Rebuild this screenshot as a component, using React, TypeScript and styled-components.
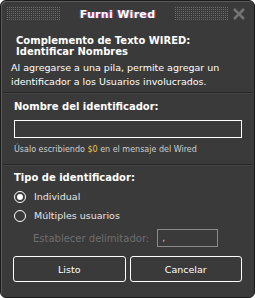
import React, {useState} from "react";
import styled, {createGlobalStyle} from "styled-components";

const Global = createGlobalStyle`
  html, body {
    margin: 0;
    padding: 0;
    background: #ffffff;
  }
  body {
    font-family: "DejaVu Sans", "Liberation Sans", sans-serif;
    -webkit-font-smoothing: none;
  }
`;

const Window = styled.div`
  width: 255px;
  height: 298px;
  box-sizing: border-box;
  background: #3a3a3a;
  border: 1px solid #1c1c1c;
  border-radius: 6px;
  box-shadow: inset 1px 1px 0 #5a5a5a;
  color: #ffffff;
  display: flex;
  flex-direction: column;
  overflow: hidden;
`;

const Header = styled.div`
  height: 26px;
  display: flex;
  align-items: center;
  padding: 0 8px 0 6px;
  gap: 8px;
`;

const Dots = styled.div`
  flex: 1;
  height: 14px;
  background-image: linear-gradient(90deg, #6b6b6b 1px, transparent 1px);
  background-size: 2px 2px;
  position: relative;
  &::after {
    content: "";
    position: absolute;
    inset: 0;
    background-image: linear-gradient(0deg, #3a3a3a 1px, transparent 1px);
    background-size: 2px 2px;
  }
`;

const Title = styled.div`
  font-weight: bold;
  font-size: 11px;
  letter-spacing: 0.3px;
  color: #ffffff;
  text-shadow: -1px 0 0 rgba(60, 80, 255, 0.7), 1px 0 0 rgba(255, 60, 60, 0.6);
  padding: 0 12px;
`;

const Close = styled.div`
  width: 14px;
  height: 14px;
  margin-left: -4px;
  display: flex;
`;

const Body = styled.div`
  flex: 1;
  display: flex;
  flex-direction: column;
`;

const Section = styled.div<{$pad?: string}>`
  padding: ${p => p.$pad || "0 12px"};
  display: flex;
  flex-direction: column;
`;

const Divider = styled.div`
  height: 1px;
  background: #262626;
  margin: 0 2px;
  border-bottom: 1px solid #444;
`;

const Heading = styled.div`
  font-weight: bold;
  font-size: 10px;
  line-height: 11px;
  padding-left: 4px;
`;

const Desc = styled.div`
  font-size: 9.5px;
  line-height: 14px;
  margin-top: 4px;
  margin-left: -1px;
`;

const Label = styled.div`
  font-weight: bold;
  font-size: 10px;
  line-height: 12px;
`;

const Input = styled.div<{$muted?: boolean; $w?: string}>`
  box-sizing: border-box;
  height: 18px;
  width: ${p => p.$w || "100%"};
  border: 1px solid ${p => (p.$muted ? "#8a8a8a" : "#ffffff")};
  background: #3a3a3a;
  font-size: 9px;
  color: #cfcfcf;
  padding: 2px 4px;
  line-height: 12px;
`;

const Help = styled.div`
  font-size: 8px;
  color: #cfcfcf;
  margin-top: 7px;
`;

const Code = styled.span`
  color: #e3c94a;
`;

const RadioRow = styled.label`
  display: flex;
  align-items: center;
  gap: 8px;
  font-size: 9.5px;
  color: #e6e6e6;
  height: 19px;
  cursor: pointer;
`;

const Circle = styled.span<{$on?: boolean}>`
  width: 10px;
  height: 10px;
  border: 1px solid #ffffff;
  border-radius: 50%;
  display: flex;
  align-items: center;
  justify-content: center;
  &::after {
    content: "";
    width: 6px;
    height: 6px;
    border-radius: 50%;
    background: ${p => (p.$on ? "#ffffff" : "transparent")};
  }
`;

const DelimRow = styled.div`
  display: flex;
  align-items: center;
  gap: 8px;
  padding-left: 19px;
  font-size: 10px;
  color: #6e6e6e;
`;

const Buttons = styled.div`
  display: grid;
  grid-template-columns: 1fr 1fr;
  gap: 4px;
  padding: 0 12px;
`;

const Btn = styled.button`
  height: 26px;
  background: #3a3a3a;
  border: 1px solid #ffffff;
  border-radius: 3px;
  color: #ffffff;
  font-family: "DejaVu Sans", sans-serif;
  font-size: 9.5px;
  cursor: pointer;
`;

export default function App() {
    const [mode, setMode] = useState(0);

    return (
        <>
            <Global/>
            <Window>
                <Header>
                    <Dots/>
                    <Title>Furni Wired</Title>
                    <Dots/>
                    <Close>
                        <svg width="14" height="14" viewBox="0 0 14 14">
                            <path d="M2 2 L12 12 M12 2 L2 12" stroke="#737373" strokeWidth="2.6"/>
                        </svg>
                    </Close>
                </Header>
                <Body>
                    <Section $pad="8px 12px 0 11px">
                        <Heading>Complemento de Texto WIRED:</Heading>
                        <Heading>Identificar Nombres</Heading>
                        <Desc>Al agregarse a una pila, permite agregar un identificador a los Usuarios involucrados.</Desc>
                    </Section>
                    <div style={{height: 3}}/>
                    <Divider/>
                    <Section $pad="7px 12px 10px 13px">
                        <Label>Nombre del identificador:</Label>
                        <div style={{height: 7}}/>
                        <Input/>
                        <Help>Úsalo escribiendo <Code>$0</Code> en el mensaje del Wired</Help>
                    </Section>
                    <Divider/>
                    <Section $pad="6px 12px 0 13px">
                        <Label>Tipo de identificador:</Label>
                        <div style={{height: 3}}/>
                        <RadioRow onClick={() => setMode(0)}>
                            <Circle $on={mode === 0}/>Individual
                        </RadioRow>
                        <RadioRow onClick={() => setMode(1)}>
                            <Circle $on={mode === 1}/>Múltiples usuarios
                        </RadioRow>
                        <div style={{height: 4}}/>
                        <DelimRow>
                            Establecer delimitador:
                            <Input $muted $w="61px">,</Input>
                        </DelimRow>
                    </Section>
                    <div style={{height: 9}}/>
                    <Buttons>
                        <Btn>Listo</Btn>
                        <Btn>Cancelar</Btn>
                    </Buttons>
                </Body>
            </Window>
        </>
    );
}
